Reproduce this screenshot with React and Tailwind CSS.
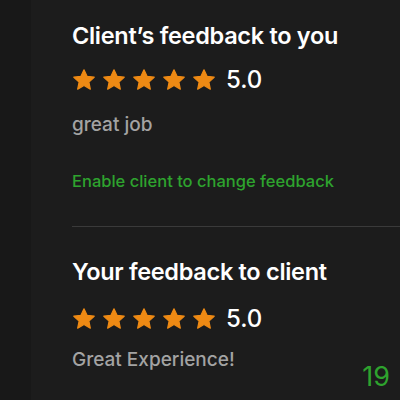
import React from "react";

function Star() {
  return (
    <svg width="24" height="24" viewBox="0 0 24 24" className="shrink-0">
      <path
        d="M12 1.8l3.05 6.55 7.15.85-5.3 4.9 1.42 7.1L12 17.6l-6.32 3.6 1.42-7.1-5.3-4.9 7.15-.85z"
        fill="#ee8a14"
        stroke="#ee8a14"
        strokeWidth="1.2"
        strokeLinejoin="round"
      />
    </svg>
  );
}

function Rating({ value }) {
  return (
    <div className="flex items-center">
      <div className="flex gap-[6px]">
        {[0, 1, 2, 3, 4].map((i) => (
          <Star key={i} />
        ))}
      </div>
      <span className="ml-[10px] text-[24px] font-medium leading-none text-white">{value}</span>
    </div>
  );
}

export default function App() {
  return (
    <div
      className="flex h-[400px] w-[400px] overflow-hidden bg-[#1c1c1c]"
      style={{ fontFamily: 'Inter, "Liberation Sans", sans-serif' }}
    >
      <div className="w-[31px] shrink-0 bg-[#181818]" />
      <div className="relative flex-1 pl-[41px]">
        <section className="pt-[22px]">
          <h2 className="text-[23.5px] font-semibold leading-[28px] tracking-[-0.3px] text-white">
            Client’s feedback to you
          </h2>
          <div className="mt-[18px]">
            <Rating value="5.0" />
          </div>
          <p className="mt-[21px] text-[19px] font-medium leading-[24px] text-[#a3a3a3]">great job</p>
          <p className="mt-[33px] text-[16.5px] font-medium leading-[22px] text-[#2ea32e]">
            Enable client to change feedback
          </p>
        </section>
        <div className="mt-[34px] h-px bg-[#3a3a3a]" />
        <section className="pt-[31px]">
          <h2 className="text-[23.5px] font-semibold leading-[28px] tracking-[-0.3px] text-white">
            Your feedback to client
          </h2>
          <div className="mt-[21px]">
            <Rating value="5.0" />
          </div>
          <p className="mt-[17px] text-[19px] font-medium leading-[24px] text-[#a3a3a3]">Great Experience!</p>
        </section>
        <span className="absolute bottom-[10px] right-[10px] text-[27px] font-normal leading-none text-[#2ea32e]">
          19
        </span>
      </div>
    </div>
  );
}
